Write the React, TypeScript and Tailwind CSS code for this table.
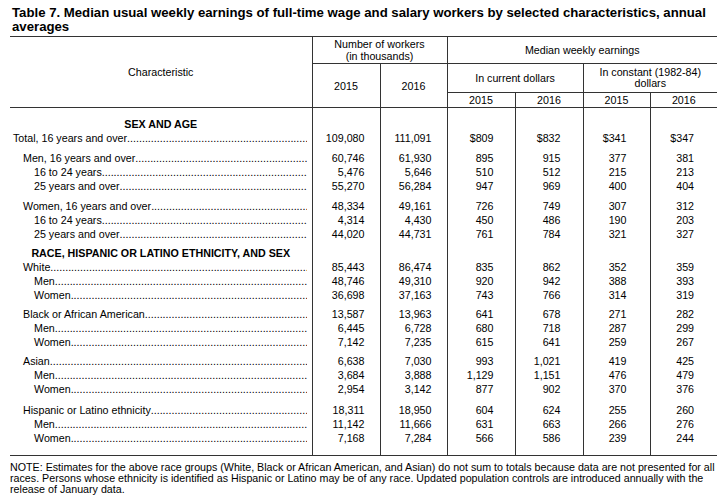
import React from "react";

type Row = { label: string; indent: 1 | 2 | 3; values: string[] };
type Block = { heading?: string; gapBefore: number; rows: Row[] };

const blocks: Block[] = [
  { heading: "SEX AND AGE", gapBefore: 9, rows: [] },
  {
    gapBefore: 0,
    rows: [{ label: "Total, 16 years and over", indent: 1, values: ["109,080", "111,091", "$809", "$832", "$341", "$347"] }],
  },
  {
    gapBefore: 6,
    rows: [
      { label: "Men, 16 years and over", indent: 2, values: ["60,746", "61,930", "895", "915", "377", "381"] },
      { label: "16 to 24 years", indent: 3, values: ["5,476", "5,646", "510", "512", "215", "213"] },
      { label: "25 years and over", indent: 3, values: ["55,270", "56,284", "947", "969", "400", "404"] },
    ],
  },
  {
    gapBefore: 6,
    rows: [
      { label: "Women, 16 years and over", indent: 2, values: ["48,334", "49,161", "726", "749", "307", "312"] },
      { label: "16 to 24 years", indent: 3, values: ["4,314", "4,430", "450", "486", "190", "203"] },
      { label: "25 years and over", indent: 3, values: ["44,020", "44,731", "761", "784", "321", "327"] },
    ],
  },
  { heading: "RACE, HISPANIC OR LATINO ETHNICITY, AND SEX", gapBefore: 5, rows: [] },
  {
    gapBefore: 0,
    rows: [
      { label: "White", indent: 2, values: ["85,443", "86,474", "835", "862", "352", "359"] },
      { label: "Men", indent: 3, values: ["48,746", "49,310", "920", "942", "388", "393"] },
      { label: "Women", indent: 3, values: ["36,698", "37,163", "743", "766", "314", "319"] },
    ],
  },
  {
    gapBefore: 5,
    rows: [
      { label: "Black or African American", indent: 2, values: ["13,587", "13,963", "641", "678", "271", "282"] },
      { label: "Men", indent: 3, values: ["6,445", "6,728", "680", "718", "287", "299"] },
      { label: "Women", indent: 3, values: ["7,142", "7,235", "615", "641", "259", "267"] },
    ],
  },
  {
    gapBefore: 5,
    rows: [
      { label: "Asian", indent: 2, values: ["6,638", "7,030", "993", "1,021", "419", "425"] },
      { label: "Men", indent: 3, values: ["3,684", "3,888", "1,129", "1,151", "476", "479"] },
      { label: "Women", indent: 3, values: ["2,954", "3,142", "877", "902", "370", "376"] },
    ],
  },
  {
    gapBefore: 7,
    rows: [
      { label: "Hispanic or Latino ethnicity", indent: 2, values: ["18,311", "18,950", "604", "624", "255", "260"] },
      { label: "Men", indent: 3, values: ["11,142", "11,666", "631", "663", "266", "276"] },
      { label: "Women", indent: 3, values: ["7,168", "7,284", "566", "586", "239", "244"] },
    ],
  },
];

const indentClass = { 1: "pl-[3px]", 2: "pl-[13px]", 3: "pl-[24px]" };
const numPad = ["pr-[15px]", "pr-[15px]", "pr-[21px]", "pr-[22px]", "pr-[23px]", "pr-[23px]"];
const line = "border-[#333]";

function Spacer({ h }: { h: string }) {
  return (
    <tr className={h}>
      <td className="p-0" />
      {numPad.map((_, i) => (
        <td key={i} className={`p-0 border-l ${line}`} />
      ))}
    </tr>
  );
}

export default function App() {
  return (
    <div className="w-[720px] h-[500px] overflow-hidden bg-white text-black font-['Liberation_Sans',Arial,sans-serif]">
      <h1 className="pl-[12px] pt-[6px] text-[13.2px] leading-[14px] font-bold whitespace-nowrap">
        Table 7. Median usual weekly earnings of full-time wage and salary workers by selected characteristics, annual
        <br />
        averages
      </h1>

      <table className={`ml-[10px] mt-[2px] w-[707px] table-fixed border-collapse text-[10.7px] leading-[14px]`}>
        <colgroup>
          <col className="w-[302px]" />
          <col className="w-[68px]" />
          <col className="w-[67px]" />
          <col className="w-[68px]" />
          <col className="w-[68px]" />
          <col className="w-[67px]" />
          <col className="w-[67px]" />
        </colgroup>
        <thead>
          <tr className={`h-[27px] border-t ${line}`}>
            <th rowSpan={3} className="p-0 font-normal text-center">
              Characteristic
            </th>
            <th colSpan={2} className={`p-0 font-normal text-center leading-[12px] border-l border-b ${line}`}>
              Number of workers
              <br />
              (in thousands)
            </th>
            <th colSpan={4} className={`p-0 font-normal text-center border-l border-b ${line}`}>
              Median weekly earnings
            </th>
          </tr>
          <tr className="h-[29px]">
            <th rowSpan={2} className={`p-0 font-normal text-center border-l ${line}`}>
              2015
            </th>
            <th rowSpan={2} className={`p-0 font-normal text-center border-l ${line}`}>
              2016
            </th>
            <th colSpan={2} className={`p-0 font-normal text-center border-l border-b ${line}`}>
              In current dollars
            </th>
            <th colSpan={2} className={`p-0 font-normal text-center leading-[11px] border-l border-b ${line}`}>
              In constant (1982-84)
              <br />
              dollars
            </th>
          </tr>
          <tr className={`h-[15px] border-b ${line}`}>
            {["2015", "2016", "2015", "2016"].map((y, i) => (
              <th key={i} className={`p-0 font-normal text-center border-l ${line}`}>
                {y}
              </th>
            ))}
          </tr>
        </thead>
        <tbody className={`border-b ${line}`}>
          {blocks.map((b, bi) => (
            <React.Fragment key={bi}>
              {b.gapBefore > 0 && (
                <Spacer h={b.gapBefore === 9 ? "h-[9px]" : b.gapBefore === 7 ? "h-[7px]" : b.gapBefore === 6 ? "h-[6px]" : "h-[5px]"} />
              )}
              {b.heading && (
                <tr className="h-[14px]">
                  <td className="p-0 text-center font-bold">{b.heading}</td>
                  {numPad.map((_, i) => (
                    <td key={i} className={`p-0 border-l ${line}`} />
                  ))}
                </tr>
              )}
              {b.rows.map((r, ri) => (
                <tr key={ri} className="h-[14px]">
                  <td className={`p-0 pr-[5px] ${indentClass[r.indent]}`}>
                    <div className="flex">
                      <span className="whitespace-nowrap">{r.label}</span>
                      <span className="flex-1 overflow-hidden whitespace-nowrap">{".".repeat(120)}</span>
                    </div>
                  </td>
                  {r.values.map((v, i) => (
                    <td key={i} className={`p-0 text-right border-l ${line} ${numPad[i]}`}>
                      {v}
                    </td>
                  ))}
                </tr>
              ))}
            </React.Fragment>
          ))}
          <Spacer h="h-[11px]" />
        </tbody>
      </table>

      <p className="pl-[10px] pt-[6px] text-[10.7px] leading-[11px] whitespace-nowrap">
        NOTE: Estimates for the above race groups (White, Black or African American, and Asian) do not sum to totals because data are not presented for all
        <br />
        races. Persons whose ethnicity is identified as Hispanic or Latino may be of any race. Updated population controls are introduced annually with the
        <br />
        release of January data.
      </p>
    </div>
  );
}
